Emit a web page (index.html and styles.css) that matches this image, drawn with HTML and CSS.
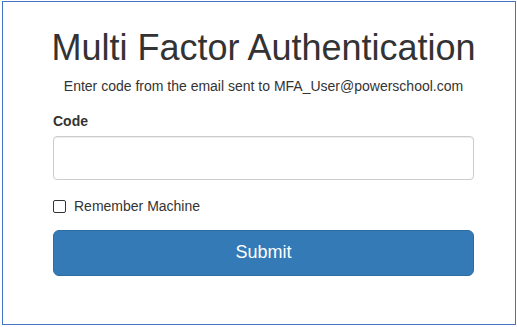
FILE: index.html
```html
<!DOCTYPE html>
<html>
<head>
<meta charset="utf-8">
<link rel="stylesheet" href="styles.css">
</head>
<body>
<div class="frame">
  <form class="mfa">
    <h1 class="title">Multi Factor Authentication</h1>
    <p class="subtitle">Enter code from the email sent to MFA_User@powerschool.com</p>
    <label class="label" for="code">Code</label>
    <input class="input" id="code" type="text">
    <label class="check"><span class="box"></span><span>Remember Machine</span></label>
    <button class="btn" type="button">Submit</button>
  </form>
</div>
</body>
</html>
```

FILE: styles.css
```css
html, body {
  margin: 0;
  padding: 0;
  background: #fff;
}
body {
  font-family: "Liberation Sans", Arial, sans-serif;
  color: #333;
  font-size: 14px;
  line-height: 1.42857;
}
.frame {
  margin: 1px 0 0 2px;
  width: 512px;
  height: 322px;
  border: 1px solid #4472c4;
  box-sizing: content-box;
}
.mfa {
  display: flex;
  flex-direction: column;
  padding: 0 41px 0 50px;
}
.title {
  margin: 24px -20px 0;
  font-size: 36px;
  font-weight: 400;
  line-height: 44px;
  text-align: center;
  white-space: nowrap;
  color: #333;
}
.subtitle {
  margin: 6px 0 0;
  text-align: center;
  font-size: 14px;
  line-height: 20px;
}
.label {
  margin-top: 15px;
  font-weight: bold;
  line-height: 20px;
}
.input {
  margin-top: 5px;
  height: 44px;
  box-sizing: border-box;
  border: 1px solid #ccc;
  border-radius: 4px;
  padding: 6px 12px;
  font: inherit;
  box-shadow: inset 0 1px 1px rgba(0,0,0,.075);
}
.check {
  margin-top: 16px;
  display: flex;
  align-items: center;
  gap: 8px;
  line-height: 20px;
}
.box {
  width: 11px;
  height: 11px;
  border: 1px solid #333;
  border-radius: 2px;
  background: #fff;
}
.btn {
  margin-top: 14px;
  height: 46px;
  border: 1px solid #2e6da4;
  border-radius: 6px;
  background: #337ab7;
  color: #fff;
  font: inherit;
  font-size: 18px;
  line-height: 1.3333;
}
```
